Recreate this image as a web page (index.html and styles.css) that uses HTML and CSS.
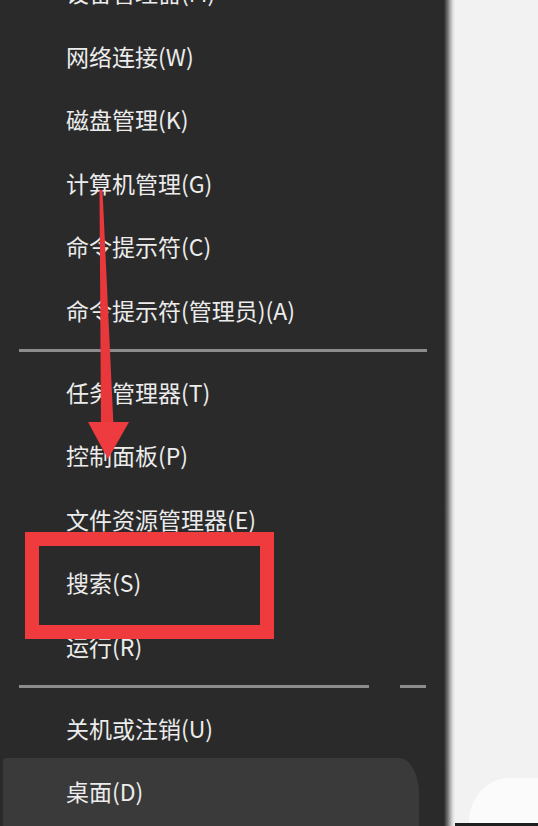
FILE: index.html
```html
<!DOCTYPE html>
<html lang="zh-CN">
<head>
<meta charset="utf-8">
<title>Win+X 菜单</title>
<link rel="stylesheet" href="styles.css">
</head>
<body>
<div class="screen">
  <div class="menu">
    <div class="item first">设备管理器(M)</div>
    <div class="item">网络连接(W)</div>
    <div class="item">磁盘管理(K)</div>
    <div class="item">计算机管理(G)</div>
    <div class="item">命令提示符(C)</div>
    <div class="item">命令提示符(管理员)(A)</div>
    <div class="sep"><span class="sep-line full"></span></div>
    <div class="item">任务管理器(T)</div>
    <div class="item">控制面板(P)</div>
    <div class="item">文件资源管理器(E)</div>
    <div class="item">搜索(S)</div>
    <div class="item">运行(R)</div>
    <div class="sep"><span class="sep-line long"></span><span class="sep-line short"></span></div>
    <div class="item short-item">关机或注销(U)</div>
    <div class="item hover">桌面(D)</div>
  </div>
  <div class="edge"></div>
  <div class="desk">
    <div class="desk-blob"></div>
    <div class="desk-line"></div>
  </div>

  <div class="mark-box"></div>
  <svg class="mark-arrow" width="538" height="826" viewBox="0 0 538 826" xmlns="http://www.w3.org/2000/svg">
    <polygon points="99.5,190 102.5,190 113.5,426 101,426" fill="#e8383c"/>
    <polygon points="88,422 129,422 108,459" fill="#ee3b3f"/>
  </svg>
</div>
</body>
</html>
```
FILE: styles.css
```css
html, body {
  margin: 0;
  padding: 0;
  height: 100%;
  overflow: hidden;
  background: #f3f3f3;
}

.screen {
  position: relative;
  width: 538px;
  height: 826px;
  display: flex;
  overflow: hidden;
}

.menu {
  width: 444px;
  flex: none;
  background: #2a2a2a;
  display: flex;
  flex-direction: column;
  font-family: "Noto Sans CJK SC", "Noto Sans", sans-serif;
  font-size: 23px;
  color: #ececec;
}

.item {
  height: 63.5px;
  line-height: 61px;
  padding-left: 66px;
  white-space: nowrap;
  flex: none;
}

.item.first {
  margin-top: -37.75px;
}

.item.short-item {
  height: 60px;
}

.item.hover {
  height: 72px;
  line-height: 66px;
  margin-left: 3px;
  padding-left: 63px;
  width: 353px;
  background: #3a3a3a;
  border-top-left-radius: 3px;
  border-top-right-radius: 20px 36px;
}

.sep {
  display: flex;
  gap: 31px;
  margin: 6px 0 10px 19px;
  height: 2.5px;
  flex: none;
}

.sep-line {
  display: block;
  height: 2.5px;
  background: #8c8c8c;
}

.sep-line.full { width: 408px; }
.sep-line.long { width: 350px; }
.sep-line.short { width: 26px; }

.edge {
  width: 11px;
  flex: none;
  background: linear-gradient(to right, #2c2c2c 0%, #6a6a6a 30%, #a8a8a8 55%, #dedede 80%, #f1f1f1 100%);
}

.desk {
  flex: 1;
  position: relative;
  background: #f2f2f2;
}

.desk-blob {
  position: absolute;
  left: 14px;
  right: -20px;
  bottom: 0;
  height: 48px;
  background: #fbfbfb;
  border-top-left-radius: 40px 44px;
}

.desk-line {
  position: absolute;
  left: 0;
  right: 0;
  bottom: 0;
  height: 3px;
  background: #1e1e1e;
}

.mark-box {
  position: absolute;
  left: 25px;
  top: 532px;
  width: 221px;
  height: 79px;
  border: 14px solid #ef3a3e;
}

.mark-arrow {
  position: absolute;
  left: 0;
  top: 0;
}
```
